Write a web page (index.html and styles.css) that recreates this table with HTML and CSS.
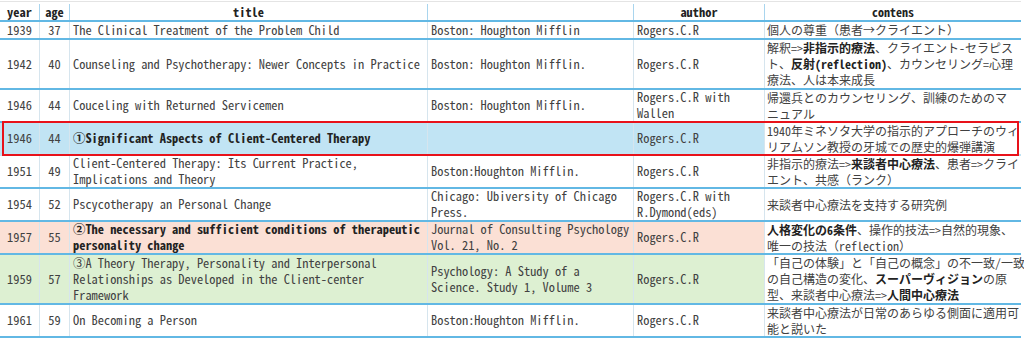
FILE: index.html
```html
<!DOCTYPE html>
<html lang="ja">
<head>
<meta charset="utf-8">
<title>Rogers</title>
<link rel="stylesheet" href="styles.css">
</head>
<body>
<div class="sheet">
  <div class="row head">
    <div class="c num"><span>year</span></div>
    <div class="c num"><span>age</span></div>
    <div class="c ctr"><span>title</span></div>
    <div class="c"></div>
    <div class="c ctr"><span>author</span></div>
    <div class="c ctr cont"><span>contens</span></div>
  </div>
  <div class="row">
    <div class="c num"><span>1939</span></div>
    <div class="c num"><span>37</span></div>
    <div class="c"><span>The Clinical Treatment of the Problem Child</span></div>
    <div class="c"><span>Boston: Houghton Mifflin</span></div>
    <div class="c"><span>Rogers.C.R</span></div>
    <div class="c cont"><span>個人の尊重（患者→クライエント）</span></div>
  </div>
  <div class="row l3">
    <div class="c num"><span>1942</span></div>
    <div class="c num"><span>40</span></div>
    <div class="c"><span>Counseling and Psychotherapy: Newer Concepts in Practice</span></div>
    <div class="c"><span>Boston: Houghton Mifflin.</span></div>
    <div class="c"><span>Rogers.C.R</span></div>
    <div class="c cont"><span>解釈=&gt;<b>非指示的療法</b>、クライエント-セラピス<br>ト、<b>反射(reflection)</b>、カウンセリング=心理<br>療法、人は本来成長</span></div>
  </div>
  <div class="row l2">
    <div class="c num"><span>1946</span></div>
    <div class="c num"><span>44</span></div>
    <div class="c"><span>Couceling with Returned Servicemen</span></div>
    <div class="c"><span>Boston: Houghton Mifflin.</span></div>
    <div class="c"><span>Rogers.C.R with<br>Wallen</span></div>
    <div class="c cont"><span>帰還兵とのカウンセリング、訓練のためのマ<br>ニュアル</span></div>
  </div>
  <div class="row l2 hl">
    <div class="c num"><span>1946</span></div>
    <div class="c num"><span>44</span></div>
    <div class="c"><span><b>①Significant Aspects of Client-Centered Therapy</b></span></div>
    <div class="c"></div>
    <div class="c"><span>Rogers.C.R</span></div>
    <div class="c cont"><span>1940年ミネソタ大学の指示的アプローチのウィ<br>リアムソン教授の牙城での歴史的爆弾講演</span></div>
  </div>
  <div class="row l2">
    <div class="c num"><span>1951</span></div>
    <div class="c num"><span>49</span></div>
    <div class="c"><span>Client-Centered Therapy: Its Current Practice,<br>Implications and Theory</span></div>
    <div class="c"><span>Boston:Houghton Mifflin.</span></div>
    <div class="c"><span>Rogers.C.R</span></div>
    <div class="c cont"><span>非指示的療法=&gt;<b>来談者中心療法</b>、患者=&gt;クライ<br>エント、共感（ランク）</span></div>
  </div>
  <div class="row l2">
    <div class="c num"><span>1954</span></div>
    <div class="c num"><span>52</span></div>
    <div class="c"><span>Pscycotherapy an Personal Change</span></div>
    <div class="c"><span>Chicago: Ubiversity of Chicago<br>Press.</span></div>
    <div class="c"><span>Rogers.C.R with<br>R.Dymond(eds)</span></div>
    <div class="c cont"><span>来談者中心療法を支持する研究例</span></div>
  </div>
  <div class="row l2 pink">
    <div class="c num"><span>1957</span></div>
    <div class="c num"><span>55</span></div>
    <div class="c"><span><b>②The necessary and sufficient conditions of therapeutic<br>personality change</b></span></div>
    <div class="c"><span>Journal of Consulting Psychology<br>Vol. 21, No. 2</span></div>
    <div class="c"><span>Rogers.C.R</span></div>
    <div class="c cont"><span><b>人格変化の6条件</b>、操作的技法=&gt;自然的現象、<br>唯一の技法（reflection）</span></div>
  </div>
  <div class="row l3 green">
    <div class="c num"><span>1959</span></div>
    <div class="c num"><span>57</span></div>
    <div class="c"><span>③A Theory Therapy, Personality and Interpersonal<br>Relationships as Developed in the Client-center<br>Framework</span></div>
    <div class="c"><span>Psychology: A Study of a<br>Science. Study 1, Volume 3</span></div>
    <div class="c"><span>Rogers.C.R</span></div>
    <div class="c cont"><span>「自己の体験」と「自己の概念」の不一致/一致<br>の自己構造の変化、<b>スーパーヴィジョン</b>の原<br>型、来談者中心療法=&gt;<b>人間中心療法</b></span></div>
  </div>
  <div class="row l2">
    <div class="c num"><span>1961</span></div>
    <div class="c num"><span>59</span></div>
    <div class="c"><span>On Becoming a Person</span></div>
    <div class="c"><span>Boston:Houghton Mifflin.</span></div>
    <div class="c"><span>Rogers.C.R</span></div>
    <div class="c cont"><span>来談者中心療法が日常のあらゆる側面に適用可<br>能と説いた</span></div>
  </div>
</div>
</body>
</html>
```
FILE: styles.css
```css
html, body {
  margin: 0;
  padding: 0;
  background: #ffffff;
}
body {
  font-family: "Noto Sans Mono CJK JP", "Noto Sans CJK JP", "Liberation Mono", monospace;
  font-size: 12.4px;
  color: #414141;
  font-variant-ligatures: none;
  font-feature-settings: "liga" 0, "calt" 0;
}
.sheet {
  width: 1021px;
  border-top: 1px solid #e4e4e4;
  margin-top: 1px;
}
.row {
  display: grid;
  grid-template-columns: 40px 30px 358px 206px 131px 256px;
  border-bottom: 2px solid #62b8e4;
  line-height: 16px;
  position: relative;
}
.row.l2 { line-height: 15.5px; }
.row.l3 { line-height: 16px; }
.c {
  display: flex;
  align-items: center;
  padding: 0 0 0 3px;
  border-right: 1px solid #d6e5ee;
  white-space: nowrap;
}
.c.num,
.c.ctr {
  justify-content: center;
  padding: 0;
}
.c.cont {
  font-size: 12px;
  padding-left: 2px;
  background: #ffffff;
  border-right: none;
}
.c.ctr.cont { padding: 0; }
.head {
  font-weight: bold;
  color: #222222;
  padding-top: 2px;
}
.head .c { border-right-color: #a9d5ee; }
b { font-weight: bold; color: #222222; }
.hl { background: #c1e4f4; border-bottom-color: transparent; }
.hl::after {
  content: "";
  position: absolute;
  left: 2px;
  right: 2px;
  top: -2px;
  bottom: -2px;
  border: 2px solid #e8121a;
  pointer-events: none;
}
.pink { background: #fbe0d5; }
.green { background: #ddf0d2; }
```
